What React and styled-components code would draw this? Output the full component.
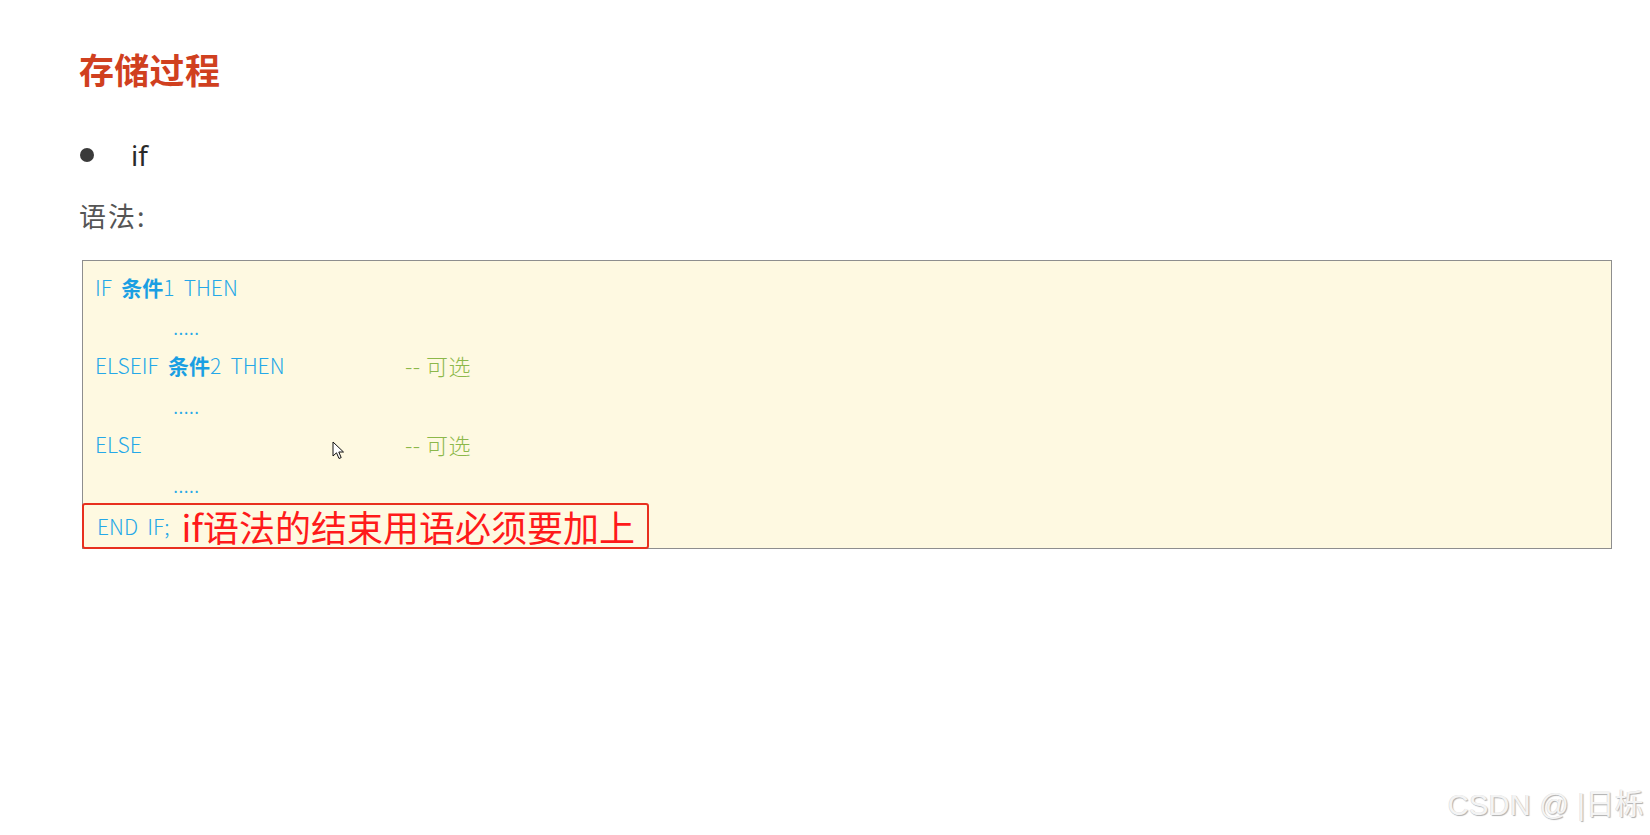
import React from "react";
import styled, { createGlobalStyle } from "styled-components";

const GlobalStyle = createGlobalStyle`
  html, body {
    margin: 0;
    padding: 0;
    background: #ffffff;
  }
  body {
    font-family: "Noto Sans CJK SC", "Noto Sans", sans-serif;
  }
`;

const Page = styled.div`
  position: relative;
  width: 1650px;
  height: 835px;
  box-sizing: border-box;
  padding: 46px 38px 0 79px;
  overflow: hidden;
  display: flex;
  flex-direction: column;
`;

const Title = styled.h1`
  margin: 0;
  font-size: 35px;
  line-height: 46px;
  font-weight: 700;
  color: #d0401f;
  letter-spacing: 0.3px;
`;

const BulletRow = styled.div`
  margin-top: 43px;
  display: flex;
  align-items: center;
  height: 40px;
`;

const Dot = styled.span`
  width: 14px;
  height: 14px;
  border-radius: 50%;
  background: #3a3a3a;
  margin-right: 37px;
  margin-left: 1px;
`;

const BulletText = styled.span`
  font-family: "Noto Sans", sans-serif;
  font-size: 28px;
  color: #2a2a2a;
  line-height: 40px;
`;

const Label = styled.div`
  margin-top: 21px;
  font-size: 27px;
  line-height: 40px;
  color: #555555;
  letter-spacing: 2px;
`;

const CodeBox = styled.div`
  margin-top: 24px;
  margin-left: 3px;
  border: 1px solid #8e8e8e;
  background: #fef9e1;
  padding: 6px 0 0 12px;
  display: flex;
  flex-direction: column;
`;

const Line = styled.div`
  display: grid;
  grid-template-columns: 310px auto;
  height: 39.4px;
  align-items: center;
  font-size: 21px;
  font-weight: 300;
  color: #25a8e8;
  padding-left: ${(p) => (p.indent ? "78px" : "0")};
  white-space: pre;
`;

const Strong = styled.b`
  font-weight: 700;
  color: #1a9fe3;
`;

const Comment = styled.span`
  color: #8cb84a;
  font-size: 22px;
  letter-spacing: 0.5px;
`;

const EndRow = styled.div`
  display: inline-flex;
  align-self: flex-start;
  align-items: center;
  height: 46px;
  box-sizing: border-box;
  margin-left: -13px;
  margin-bottom: -1px;
  padding: 0 12px 0 13px;
  border: 2px solid #e8301f;
  border-radius: 3px;
  font-size: 21px;
  font-weight: 300;
  color: #25a8e8;
  white-space: pre;
`;

const Note = styled.span`
  margin-left: 12px;
  font-size: 36px;
  font-weight: 400;
  color: #ff1a1a;
  line-height: 42px;
`;

const Cursor = styled.svg`
  position: absolute;
  left: 332px;
  top: 441px;
`;

const Watermark = styled.div`
  position: absolute;
  right: 6px;
  bottom: 12px;
  font-family: "Liberation Sans", "Noto Sans CJK SC", sans-serif;
  font-size: 29px;
  color: #f4f4f4;
  text-shadow: 1px 1px 1px #b0b0b0, -0.5px -0.5px 0 #dcdcdc;
  letter-spacing: 0.3px;
`;

const lines = [
  { code: <>IF  <Strong>条件</Strong>1  THEN</> },
  { code: ".....", indent: true },
  { code: <>ELSEIF  <Strong>条件</Strong>2  THEN</>, note: "-- 可选" },
  { code: ".....", indent: true },
  { code: "ELSE", note: "-- 可选" },
  { code: ".....", indent: true },
];

export default function App() {
  return (
    <>
      <GlobalStyle />
      <Page>
        <Title>存储过程</Title>
        <BulletRow>
          <Dot />
          <BulletText>if</BulletText>
        </BulletRow>
        <Label>语法:</Label>
        <CodeBox>
          {lines.map((l, i) => (
            <Line key={i} indent={l.indent}>
              <span>{l.code}</span>
              {l.note && <Comment>{l.note}</Comment>}
            </Line>
          ))}
          <EndRow>
            END  IF;
            <Note>if语法的结束用语必须要加上</Note>
          </EndRow>
        </CodeBox>
        <Cursor width="14" height="20" viewBox="0 0 14 20">
          <path
            d="M1 1 L1 15 L4.5 11.8 L7 17.5 L9.2 16.6 L6.8 11 L11.5 11 Z"
            fill="#ffffff"
            stroke="#111111"
            strokeWidth="1"
            strokeLinejoin="round"
          />
        </Cursor>
        <Watermark>CSDN @ |日栎</Watermark>
      </Page>
    </>
  );
}
